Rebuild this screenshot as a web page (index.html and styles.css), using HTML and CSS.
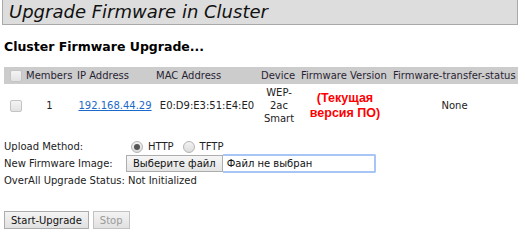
FILE: index.html
```html
<!DOCTYPE html>
<html>
<head>
    <title>Upgrade Firmware in Cluster</title>
    <link rel="stylesheet" href="styles.css">
</head>
<body>
    <div class="page-title">Upgrade Firmware in Cluster</div>

    <h2 class="section-title">Cluster Firmware Upgrade...</h2>

    <table class="members">
        <colgroup>
            <col class="c-check">
            <col class="c-members">
            <col class="c-ip">
            <col class="c-mac">
            <col class="c-device">
            <col class="c-version">
            <col class="c-status">
        </colgroup>
        <thead>
            <tr>
                <th><span class="check"></span></th>
                <th>Members</th>
                <th>IP Address</th>
                <th class="mac-head">MAC Address</th>
                <th>Device</th>
                <th>Firmware Version</th>
                <th>Firmware-transfer-status</th>
            </tr>
        </thead>
        <tbody>
            <tr>
                <td class="left"><span class="check"></span></td>
                <td>1</td>
                <td><a href="#">192.168.44.29</a></td>
                <td>E0:D9:E3:51:E4:E0</td>
                <td>WEP-<br>2ac<br>Smart</td>
                <td class="version">(Текущая<br>версия ПО)</td>
                <td>None</td>
            </tr>
        </tbody>
    </table>

    <div class="upgrade-form">
        <div class="label">Upload Method:</div>
        <div class="methods">
            <span class="radio checked"></span><span class="method">HTTP</span>
            <span class="radio"></span><span class="method">TFTP</span>
        </div>

        <div class="label">New Firmware Image:</div>
        <div class="file-input">
            <span class="file-button">Выберите файл</span>
            <span class="file-name">Файл не выбран</span>
        </div>

        <div class="label status-row">OverAll Upgrade Status: Not Initialized</div>
    </div>

    <div class="actions">
        <button class="btn">Start-Upgrade</button>
        <button class="btn" disabled>Stop</button>
    </div>
</body>
</html>
```

FILE: styles.css
```css
* {
    margin: 0;
    padding: 0;
    box-sizing: border-box;
}

body {
    font-family: 'DejaVu Sans', Verdana, sans-serif;
    font-size: 10px;
    color: #222;
    background: #fff;
}

.page-title {
    margin: 0 2px 0 2px;
    height: 25px;
    padding: 0 0 0 6px;
    background: #dddddd;
    border: 1px solid #a9a9a9;
    border-top: none;
    font-size: 18px;
    font-style: italic;
    color: #111;
    line-height: 23px;
}

.section-title {
    margin: 14px 0 0 4px;
    font-size: 12.5px;
    font-weight: bold;
    color: #000;
    line-height: 15px;
}

.members {
    margin: 13px 0 0 4px;
    width: 514px;
    table-layout: fixed;
    border-collapse: collapse;
}

.c-check { width: 20px; }
.c-members { width: 51px; }
.c-ip { width: 80px; }
.c-mac { width: 104px; }
.c-device { width: 40px; }
.c-version { width: 92px; }
.c-status { width: 127px; }

.members th {
    background: #cccccc;
    height: 17px;
    font-weight: normal;
    text-align: left;
    white-space: nowrap;
    padding: 0 0 0 2px;
    color: #2a1f33;
}

.members th.mac-head {
    padding-left: 1px;
}

.members td {
    text-align: center;
    padding: 2px 0 2px 0;
    line-height: 13px;
    vertical-align: middle;
}

.members td.left {
    text-align: left;
    padding-left: 6px;
}

.members th:first-child {
    padding-left: 6px;
}

.members a {
    color: #1b6ac9;
}

.members td.version {
    font-family: 'Liberation Sans', Arial, sans-serif;
    font-size: 12.5px;
    font-weight: bold;
    color: #ff0000;
    line-height: 15px;
}

.check {
    display: inline-block;
    width: 12px;
    height: 12px;
    border: 1px solid #c4c4c4;
    border-radius: 2px;
    background: linear-gradient(#f4f4f4, #e2e2e2);
    vertical-align: middle;
}

.upgrade-form {
    margin: 11px 0 0 4px;
    display: grid;
    grid-template-columns: 122px 1fr;
    grid-auto-rows: 17px;
    align-items: center;
}

.label {
    line-height: 17px;
}

.status-row {
    grid-column: 1 / 3;
}

.methods {
    display: flex;
    align-items: center;
    height: 17px;
}

.radio {
    width: 12px;
    height: 12px;
    border: 1px solid #b4b4b4;
    border-radius: 50%;
    background: linear-gradient(#f2f2f2, #dcdcdc);
    margin: 0 5px 0 5px;
    position: relative;
}

.radio.checked::after {
    content: '';
    position: absolute;
    left: 2px;
    top: 2px;
    width: 6px;
    height: 6px;
    border-radius: 50%;
    background: #555;
}

.method {
    margin-right: 4px;
}

.file-input {
    display: flex;
    align-items: stretch;
    height: 19px;
    width: 250px;
}

.file-button {
    display: flex;
    align-items: center;
    padding: 0 6px;
    border: 1px solid #adadad;
    background: linear-gradient(#f6f6f6, #e4e4e4);
    color: #111;
    margin: 1px 0;
}

.file-name {
    flex: 1;
    display: flex;
    align-items: center;
    padding-left: 4px;
    border: 2px solid #a7c6f5;
    border-left: none;
    border-radius: 0 2px 2px 0;
    color: #111;
}

.actions {
    display: flex;
    gap: 4px;
    margin: 22px 0 0 4px;
}

.btn {
    font-family: 'DejaVu Sans', Verdana, sans-serif;
    font-size: 10px;
    height: 18px;
    padding: 0 6px;
    border: 1px solid #acacac;
    background: linear-gradient(#f4f4f4, #e1e1e1);
    color: #111;
}

.btn:disabled {
    color: #9a9a9a;
    border-color: #c2c2c2;
}
```
